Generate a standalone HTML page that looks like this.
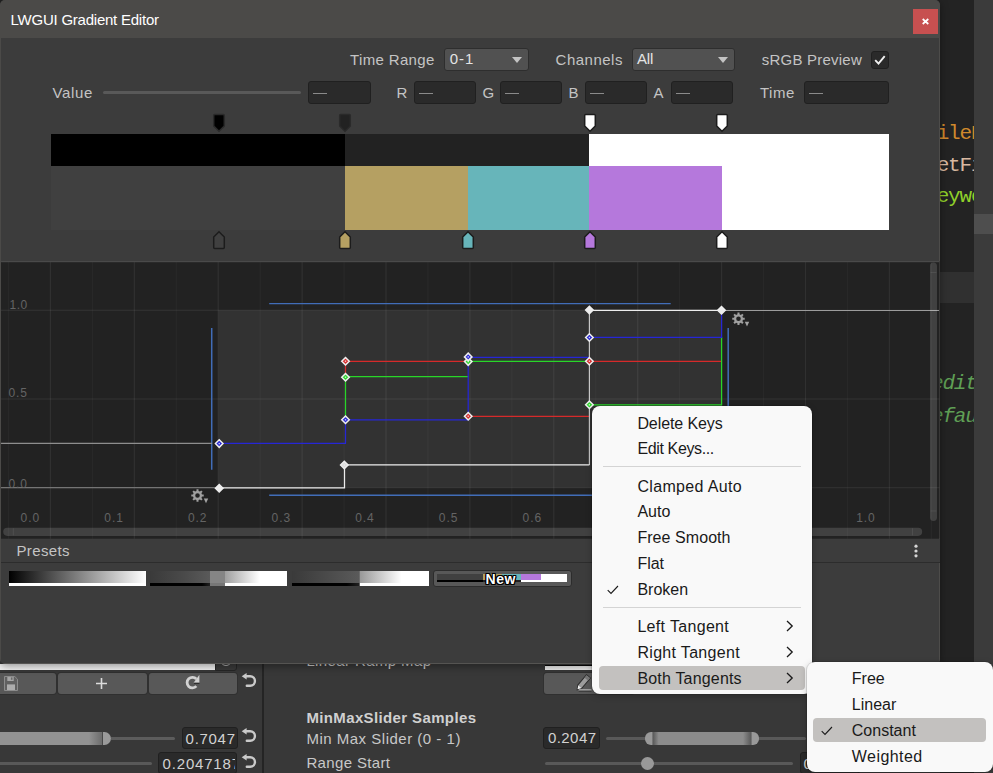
<!DOCTYPE html>
<html><head><meta charset="utf-8"><title>LWGUI Gradient Editor</title>
<style>
html,body{margin:0;padding:0;}
body{width:993px;height:773px;overflow:hidden;background:#222222;position:relative;font-family:"Liberation Sans",sans-serif;}
body div,body span,body svg{position:absolute;display:block;}
span{white-space:pre;}
</style></head><body>
<div style="left:940px;top:0px;width:34px;height:773px;background:#232323;"></div>
<div style="left:940px;top:272px;width:34px;height:31px;background:#303030;"></div>
<div style="left:974px;top:0px;width:19px;height:773px;background:#3b3b3b;"></div>
<div style="left:974px;top:214px;width:19px;height:20px;background:#4e4e4e;"></div>
<div style="left:940px;top:0;width:34px;height:773px;overflow:hidden">
<span style="left:-14.7px;top:119.8px;color:#d0892c;font-size:21px;line-height:28px;letter-spacing:-1.2px;font-family:'Liberation Mono',monospace;">FileName</span>
<span style="left:-14.7px;top:151.6px;color:#d9b8a0;font-size:21px;line-height:28px;letter-spacing:-1.2px;font-family:'Liberation Mono',monospace;">SetFile</span>
<span style="left:-14.7px;top:182.7px;color:#8fd02a;font-size:21px;line-height:28px;letter-spacing:-1.2px;font-family:'Liberation Mono',monospace;">Keyword</span>
<span style="left:-9px;top:370.3px;color:#5f9f55;font-style:italic;font-size:21px;line-height:28px;letter-spacing:-1.2px;font-family:'Liberation Mono',monospace;">editor</span>
<span style="left:-9px;top:402.7px;color:#5f9f55;font-style:italic;font-size:21px;line-height:28px;letter-spacing:-1.2px;font-family:'Liberation Mono',monospace;">efault</span>
</div>
<div style="left:0px;top:655px;width:940px;height:118px;background:#383838;"></div>
<div style="left:264px;top:655px;width:676px;height:118px;background:#383838;"></div>
<div style="left:262px;top:655px;width:2px;height:118px;background:#242424;"></div>
<div style="left:0px;top:664px;width:215px;height:6px;background:#f2f2f2;"></div>
<div style="left:215px;top:655px;width:22px;height:16px;background:#3a3a3a;border:1px solid #262626;box-sizing:border-box;border-radius:0 0 3px 0;"></div>
<div style="left:219.5px;top:654px;width:12px;height:12px;border:1.5px solid #b0b0b0;border-radius:50%;box-sizing:border-box"></div>
<div style="left:544.5px;top:665px;width:60px;height:1px;background:#0a0a0a;"></div>
<div style="left:544.5px;top:666px;width:60px;height:4px;background:#ebebeb;"></div>
<div style="left:-3px;top:673px;width:59px;height:21px;background:#585858;box-shadow:0 0 0 1px #303030;border-radius:0 3px 3px 0"></div>
<div style="left:58px;top:673px;width:88.5px;height:21px;background:#585858;box-shadow:0 0 0 1px #303030;border-radius:3px"></div>
<div style="left:148.5px;top:673px;width:88.5px;height:21px;background:#585858;box-shadow:0 0 0 1px #303030;border-radius:3px"></div>
<div style="left:544px;top:673px;width:90px;height:21px;background:#585858;box-shadow:0 0 0 1px #303030;border-radius:3px"></div>
<svg style="left:3.7px;top:675.7px" width="14" height="15" viewBox="0 0 14 15"><path d="M0.5 0.5h10.3l2.7 2.7v11.3h-13z" fill="#616161" stroke="#8c8c8c"/><rect x="3.3" y="1" width="6.4" height="4" fill="#a6a6a6"/><rect x="6.9" y="1.4" width="1.6" height="2.4" fill="#6a6a6a"/><rect x="3" y="8.4" width="8" height="5.6" fill="#adadad"/></svg>
<svg style="left:95px;top:677px" width="13" height="13" viewBox="0 0 13 13"><path d="M6.5 1v11M1 6.5h11" stroke="#dcdcdc" stroke-width="1.6" fill="none"/></svg>
<svg style="left:185px;top:674px" width="16" height="17" viewBox="0 0 16 17"><path d="M11.34 12.15A5.3 5.3 0 1 1 11.34 5.05" stroke="#d2d2d2" stroke-width="2.8" fill="none"/><path d="M14.4 0.7V8.7H8.6z" fill="#d2d2d2"/><path d="M9 9.3h5.4" stroke="#262626" stroke-width="1"/></svg>
<svg style="left:574px;top:672px" width="20" height="21" viewBox="0 0 20 21"><g transform="translate(3.2,17.8) rotate(-50)"><path d="M0 0L4 -2.6H17.6V2.6H4Z" fill="#9c9c9c" stroke="#2c2c2c" stroke-width="1"/><path d="M0.6 0L4 -2.1V2.1Z" fill="#ececec"/><path d="M14 -2.1H17.1V2.1H14Z" fill="#777777"/></g><path d="M4.7 18h12.7" stroke="#c4c4c4" stroke-width="1.3"/><path d="M4.7 19.1h12.7" stroke="#2a2a2a" stroke-width="0.9"/></svg>
<svg style="left:241px;top:672.1px" width="17" height="17" viewBox="0 0 17 17"><path d="M5.4 4.3h3.8a4.75 4.75 0 0 1 0 9.5H5.8" stroke="#cacaca" stroke-width="2.4" fill="none" stroke-linecap="round"/><path d="M0.7 4.3l4.9-3.2v6.4z" fill="#cacaca"/></svg>
<svg style="left:241px;top:727.3px" width="17" height="17" viewBox="0 0 17 17"><path d="M5.4 4.3h3.8a4.75 4.75 0 0 1 0 9.5H5.8" stroke="#cacaca" stroke-width="2.4" fill="none" stroke-linecap="round"/><path d="M0.7 4.3l4.9-3.2v6.4z" fill="#cacaca"/></svg>
<svg style="left:241px;top:752.5px" width="17" height="17" viewBox="0 0 17 17"><path d="M5.4 4.3h3.8a4.75 4.75 0 0 1 0 9.5H5.8" stroke="#cacaca" stroke-width="2.4" fill="none" stroke-linecap="round"/><path d="M0.7 4.3l4.9-3.2v6.4z" fill="#cacaca"/></svg>
<div style="left:-4px;top:732px;width:106px;height:13px;background:linear-gradient(90deg,#929292 0,#929292 87.7%,#6c6c6c 100%);border-radius:3px 0 0 3px"></div>
<div style="left:102px;top:732px;width:0.7px;height:13px;background:#484848;"></div>
<div style="left:102.6px;top:732px;width:8.4px;height:13px;background:#9a9a9a;border-radius:0 6.5px 6.5px 0"></div>
<div style="left:110.5px;top:737px;width:64px;height:3.2px;background:#5c5c5c;border-radius:0 1.5px 1.5px 0;"></div>
<div style="left:181.5px;top:727px;width:56px;height:22.3px;background:#2a2a2a;border:1px solid #202020;box-sizing:border-box;border-radius:3px;overflow:hidden"></div>
<span style="left:185.60px;top:729.57px;font-size:15px;line-height:18px;color:#d2d2d2;letter-spacing:0.704px;font-weight:400;">0.7047</span>
<div style="left:-2px;top:762px;width:154px;height:3px;background:#595959;border-radius:1.5px;"></div>
<div style="left:158.3px;top:752.2px;width:79.2px;height:22.3px;background:#2a2a2a;border:1px solid #202020;box-sizing:border-box;border-radius:3px;"></div>
<div style="left:159px;top:753px;width:76px;height:20px;overflow:hidden">
<span style="left:3.60px;top:1.67px;font-size:15px;line-height:18px;color:#d2d2d2;letter-spacing:0.812px;font-weight:400;">0.2047187</span>
</div>
<span style="left:306.40px;top:651.67px;font-size:15px;line-height:18px;color:#c8c8c8;letter-spacing:0.384px;font-weight:400;">Linear Ramp Map</span>
<span style="left:306.40px;top:708.87px;font-size:15px;line-height:18px;color:#d0d0d0;letter-spacing:0.371px;font-weight:700;">MinMaxSlider Samples</span>
<span style="left:306.40px;top:729.67px;font-size:15px;line-height:18px;color:#c8c8c8;letter-spacing:0.506px;font-weight:400;">Min Max Slider (0 - 1)</span>
<span style="left:306.40px;top:754.47px;font-size:15px;line-height:18px;color:#c8c8c8;letter-spacing:0.355px;font-weight:400;">Range Start</span>
<div style="left:543px;top:727px;width:57px;height:22.3px;background:#2a2a2a;border:1px solid #202020;box-sizing:border-box;border-radius:3px;"></div>
<span style="left:548.00px;top:729.47px;font-size:15px;line-height:18px;color:#d2d2d2;letter-spacing:0.424px;font-weight:400;">0.2047</span>
<div style="left:605.5px;top:737px;width:200px;height:3px;background:#595959;border-radius:1.5px;"></div>
<div style="left:645px;top:732px;width:114px;height:13px;background:linear-gradient(90deg,#999 0,#999 6%,#5a5a5a 7%,#8c8c8c 12%,#8c8c8c 86%,#5a5a5a 93%,#999 94%,#999 100%);border-radius:6px"></div>
<div style="left:545px;top:762px;width:248px;height:3px;background:#595959;border-radius:1.5px;"></div>
<div style="left:641px;top:757px;width:13px;height:13px;background:#999;border-radius:50%"></div>
<div style="left:800px;top:752.2px;width:60px;height:22.3px;background:#2a2a2a;border:1px solid #202020;box-sizing:border-box;border-radius:3px;"></div>
<span style="left:803.60px;top:754.57px;font-size:15px;line-height:18px;color:#d2d2d2;letter-spacing:0.000px;font-weight:400;">0.2</span>
<div style="left:0;top:0;width:940px;height:663.7px;background:#3c3c3c;border-radius:5px;overflow:hidden;box-shadow:0 2px 9px rgba(0,0,0,0.4)">
<div style="left:0px;top:0px;width:940px;height:38px;background:#4b4a48;"></div>
<div style="left:0px;top:38px;width:1px;height:626px;background:#4b4a48;"></div>
<div style="left:0px;top:662.7px;width:940px;height:1px;background:#555452;"></div>
<div style="left:938.7px;top:38px;width:1.3px;height:626px;background:#4d4c4a;"></div>
<span style="left:10.60px;top:10.67px;font-size:15px;line-height:18px;color:#ffffff;letter-spacing:-0.235px;font-weight:400;">LWGUI Gradient Editor</span>
<div style="left:913px;top:9px;width:25px;height:25px;background:#c75050;"></div>
<svg style="left:920px;top:15.5px" width="11" height="11" viewBox="0 0 11 11"><path d="M2.7 3l5.6 5M8.3 3l-5.6 5" stroke="#fff" stroke-width="1.7" fill="none"/></svg>
<span style="left:350.00px;top:50.67px;font-size:15px;line-height:18px;color:#c4c4c4;letter-spacing:0.350px;font-weight:400;">Time Range</span>
<div style="left:444px;top:48px;width:84.5px;height:22.5px;background:#515151;border:1px solid #2e2e2e;box-sizing:border-box;border-radius:3px;"></div>
<span style="left:449.80px;top:49.87px;font-size:15px;line-height:18px;color:#e4e4e4;letter-spacing:0.910px;font-weight:400;">0-1</span>
<svg style="left:511.5px;top:57px" width="10" height="6" viewBox="0 0 10 6"><path d="M0 0h10l-5 6z" fill="#c4c4c4"/></svg>
<span style="left:555.60px;top:50.67px;font-size:15px;line-height:18px;color:#c4c4c4;letter-spacing:0.489px;font-weight:400;">Channels</span>
<div style="left:632px;top:48px;width:102.5px;height:22.5px;background:#515151;border:1px solid #2e2e2e;box-sizing:border-box;border-radius:3px;"></div>
<span style="left:637.00px;top:49.87px;font-size:15px;line-height:18px;color:#e4e4e4;letter-spacing:-0.135px;font-weight:400;">All</span>
<svg style="left:717.5px;top:57px" width="10" height="6" viewBox="0 0 10 6"><path d="M0 0h10l-5 6z" fill="#c4c4c4"/></svg>
<span style="left:761.70px;top:50.67px;font-size:15px;line-height:18px;color:#c4c4c4;letter-spacing:0.234px;font-weight:400;">sRGB Preview</span>
<div style="left:871px;top:51px;width:17.5px;height:18px;background:#2a2a2a;border:1px solid #202020;box-sizing:border-box;border-radius:3px;"></div>
<svg style="left:873px;top:53px" width="14" height="14" viewBox="0 0 14 14"><path d="M2.2 7.2l3.3 3.4 6.2-7.4" stroke="#f0f0f0" stroke-width="1.9" fill="none"/></svg>
<span style="left:52.40px;top:83.77px;font-size:15px;line-height:18px;color:#c4c4c4;letter-spacing:0.687px;font-weight:400;">Value</span>
<div style="left:103px;top:91px;width:198px;height:3px;background:#595959;border-radius:1.5px;"></div>
<div style="left:308px;top:81px;width:62.5px;height:22.5px;background:#2a2a2a;border:1px solid #202020;box-sizing:border-box;border-radius:3px;"></div>
<div style="left:312.5px;top:93px;width:14.5px;height:1px;background:#8a8a8a;"></div>
<span style="left:396.40px;top:83.97px;font-size:15px;line-height:18px;color:#c4c4c4;letter-spacing:0.000px;font-weight:400;">R</span>
<div style="left:414px;top:81px;width:62px;height:22.5px;background:#2a2a2a;border:1px solid #202020;box-sizing:border-box;border-radius:3px;"></div>
<div style="left:418.5px;top:93px;width:14.5px;height:1px;background:#8a8a8a;"></div>
<span style="left:482.60px;top:83.97px;font-size:15px;line-height:18px;color:#c4c4c4;letter-spacing:0.000px;font-weight:400;">G</span>
<div style="left:500px;top:81px;width:62px;height:22.5px;background:#2a2a2a;border:1px solid #202020;box-sizing:border-box;border-radius:3px;"></div>
<div style="left:504.5px;top:93px;width:14.5px;height:1px;background:#8a8a8a;"></div>
<span style="left:568.50px;top:83.97px;font-size:15px;line-height:18px;color:#c4c4c4;letter-spacing:0.000px;font-weight:400;">B</span>
<div style="left:585.3px;top:81px;width:61.700000000000045px;height:22.5px;background:#2a2a2a;border:1px solid #202020;box-sizing:border-box;border-radius:3px;"></div>
<div style="left:589.8px;top:93px;width:14.5px;height:1px;background:#8a8a8a;"></div>
<span style="left:653.40px;top:83.97px;font-size:15px;line-height:18px;color:#c4c4c4;letter-spacing:0.000px;font-weight:400;">A</span>
<div style="left:671px;top:81px;width:62px;height:22.5px;background:#2a2a2a;border:1px solid #202020;box-sizing:border-box;border-radius:3px;"></div>
<div style="left:675.5px;top:93px;width:14.5px;height:1px;background:#8a8a8a;"></div>
<span style="left:759.90px;top:83.97px;font-size:15px;line-height:18px;color:#c4c4c4;letter-spacing:0.541px;font-weight:400;">Time</span>
<div style="left:804px;top:81px;width:85px;height:22.5px;background:#2a2a2a;border:1px solid #202020;box-sizing:border-box;border-radius:3px;"></div>
<div style="left:808.5px;top:93px;width:14.5px;height:1px;background:#8a8a8a;"></div>
<div style="left:51px;top:134px;width:838px;height:96px;background:#ffffff;"></div>
<div style="left:51px;top:134px;width:293.7px;height:32px;background:#000000;"></div>
<div style="left:344.7px;top:134px;width:244.6px;height:32px;background:#222222;"></div>
<div style="left:51px;top:166px;width:293.7px;height:64px;background:#404040;"></div>
<div style="left:344.7px;top:166px;width:123.5px;height:64px;background:#b5a062;"></div>
<div style="left:468px;top:166px;width:121.3px;height:64px;background:#67b5ba;"></div>
<div style="left:589.3px;top:166px;width:132.4px;height:64px;background:#b578dc;"></div>
<svg style="left:212.2px;top:113px" width="14" height="20" viewBox="0 0 14 20"><path d="M1.7 2.5a1 1 0 0 1 1-1h8.6a1 1 0 0 1 1 1v10.5l-5.3 5.3-5.3-5.3z" fill="#000000" stroke="#2a2a2a" stroke-width="1.5"/></svg>
<svg style="left:337.8px;top:113px" width="14" height="20" viewBox="0 0 14 20"><path d="M1.7 2.5a1 1 0 0 1 1-1h8.6a1 1 0 0 1 1 1v10.5l-5.3 5.3-5.3-5.3z" fill="#222222" stroke="#2a2a2a" stroke-width="1.5"/></svg>
<svg style="left:582.6px;top:113px" width="14" height="20" viewBox="0 0 14 20"><path d="M1.7 2.5a1 1 0 0 1 1-1h8.6a1 1 0 0 1 1 1v10.5l-5.3 5.3-5.3-5.3z" fill="#ffffff" stroke="#1c1c1c" stroke-width="1.5"/></svg>
<svg style="left:714.9px;top:113px" width="14" height="20" viewBox="0 0 14 20"><path d="M1.7 2.5a1 1 0 0 1 1-1h8.6a1 1 0 0 1 1 1v10.5l-5.3 5.3-5.3-5.3z" fill="#ffffff" stroke="#1c1c1c" stroke-width="1.5"/></svg>
<svg style="left:212.2px;top:230px" width="14" height="20" viewBox="0 0 14 20"><path d="M1.7 17.5a1 1 0 0 0 1 1h8.6a1 1 0 0 0 1-1v-10.5l-5.3-5.3-5.3 5.3z" fill="#404040" stroke="#1c1c1c" stroke-width="1.5"/></svg>
<svg style="left:337.8px;top:230px" width="14" height="20" viewBox="0 0 14 20"><path d="M1.7 17.5a1 1 0 0 0 1 1h8.6a1 1 0 0 0 1-1v-10.5l-5.3-5.3-5.3 5.3z" fill="#b5a062" stroke="#1c1c1c" stroke-width="1.5"/></svg>
<svg style="left:461.2px;top:230px" width="14" height="20" viewBox="0 0 14 20"><path d="M1.7 17.5a1 1 0 0 0 1 1h8.6a1 1 0 0 0 1-1v-10.5l-5.3-5.3-5.3 5.3z" fill="#67b5ba" stroke="#1c1c1c" stroke-width="1.5"/></svg>
<svg style="left:582.6px;top:230px" width="14" height="20" viewBox="0 0 14 20"><path d="M1.7 17.5a1 1 0 0 0 1 1h8.6a1 1 0 0 0 1-1v-10.5l-5.3-5.3-5.3 5.3z" fill="#b578dc" stroke="#1c1c1c" stroke-width="1.5"/></svg>
<svg style="left:714.9px;top:230px" width="14" height="20" viewBox="0 0 14 20"><path d="M1.7 17.5a1 1 0 0 0 1 1h8.6a1 1 0 0 0 1-1v-10.5l-5.3-5.3-5.3 5.3z" fill="#ffffff" stroke="#1c1c1c" stroke-width="1.5"/></svg>
<svg style="left:1px;top:261px" width="938.5" height="277.7" viewBox="1 261 938.5 277.7"><rect x="1" y="261" width="938.5" height="277.7" fill="#222222"/><rect x="218.4" y="310.3" width="503.4" height="177.4" fill="#323232"/><rect x="7.85" y="261" width="1.2" height="277.7" fill="#ffffff" fill-opacity="0.03"/><rect x="49.80" y="261" width="1.2" height="277.7" fill="#ffffff" fill-opacity="0.065"/><rect x="91.75" y="261" width="1.2" height="277.7" fill="#ffffff" fill-opacity="0.03"/><rect x="133.70" y="261" width="1.2" height="277.7" fill="#ffffff" fill-opacity="0.065"/><rect x="175.65" y="261" width="1.2" height="277.7" fill="#ffffff" fill-opacity="0.03"/><rect x="217.60" y="261" width="1.2" height="277.7" fill="#ffffff" fill-opacity="0.065"/><rect x="259.55" y="261" width="1.2" height="277.7" fill="#ffffff" fill-opacity="0.03"/><rect x="301.50" y="261" width="1.2" height="277.7" fill="#ffffff" fill-opacity="0.065"/><rect x="343.45" y="261" width="1.2" height="277.7" fill="#ffffff" fill-opacity="0.03"/><rect x="385.40" y="261" width="1.2" height="277.7" fill="#ffffff" fill-opacity="0.065"/><rect x="427.35" y="261" width="1.2" height="277.7" fill="#ffffff" fill-opacity="0.03"/><rect x="469.30" y="261" width="1.2" height="277.7" fill="#ffffff" fill-opacity="0.065"/><rect x="511.25" y="261" width="1.2" height="277.7" fill="#ffffff" fill-opacity="0.03"/><rect x="553.20" y="261" width="1.2" height="277.7" fill="#ffffff" fill-opacity="0.065"/><rect x="595.15" y="261" width="1.2" height="277.7" fill="#ffffff" fill-opacity="0.03"/><rect x="637.10" y="261" width="1.2" height="277.7" fill="#ffffff" fill-opacity="0.065"/><rect x="679.05" y="261" width="1.2" height="277.7" fill="#ffffff" fill-opacity="0.03"/><rect x="721.00" y="261" width="1.2" height="277.7" fill="#ffffff" fill-opacity="0.065"/><rect x="762.95" y="261" width="1.2" height="277.7" fill="#ffffff" fill-opacity="0.03"/><rect x="804.90" y="261" width="1.2" height="277.7" fill="#ffffff" fill-opacity="0.065"/><rect x="846.85" y="261" width="1.2" height="277.7" fill="#ffffff" fill-opacity="0.03"/><rect x="888.80" y="261" width="1.2" height="277.7" fill="#ffffff" fill-opacity="0.065"/><rect x="930.75" y="261" width="1.2" height="277.7" fill="#ffffff" fill-opacity="0.03"/><rect x="1" y="309.70" width="938.5" height="1.2" fill="#ffffff" fill-opacity="0.065"/><rect x="1" y="398.40" width="938.5" height="1.2" fill="#ffffff" fill-opacity="0.065"/><rect x="1" y="487.10" width="938.5" height="1.2" fill="#ffffff" fill-opacity="0.065"/><rect x="1" y="261" width="938.5" height="1.2" fill="#4a4a4a"/><path d="M269.2 303.6H670.7M269.2 495.2H670.7" stroke="#416db8" stroke-width="1.4" fill="none"/><path d="M211.7 327.9V469.8M728.2 327.9V469.8" stroke="#416db8" stroke-width="1.5" fill="none"/><path d="M1 443.5H212" stroke="#8e8e8e" stroke-width="1.25" fill="none"/><path d="M1 487.7H219" stroke="#747474" stroke-width="1.15" fill="none"/><path d="M721.6 310.5H939" stroke="#9c9c9c" stroke-width="1.2" fill="none"/><path d="M345.5 378V361.5H468.2M468.2 416.4H589.4M589.4 361.5H721.6" stroke="#d62a2a" stroke-width="1.25" fill="none"/><path d="M345.5 421V376.6H468.2M468.2 361.5H589.4M589.4 404.9H721.6V337" stroke="#28d628" stroke-width="1.25" fill="none"/><path d="M219 443.5H345.5V420H468.2V357.5H589.4M589.4 337.5H721.6V310.5" stroke="#2626d6" stroke-width="1.25" fill="none"/><path d="M589.4 465V310.5" stroke="#cdcdcd" stroke-width="1.15" fill="none"/><path d="M219 487.8H344.5V465H589.4M589.4 310.5H721.6" stroke="#ededed" stroke-width="1.25" fill="none"/><path d="M345.5 357.45L349.25 361.2L345.5 364.95L341.75 361.2Z" fill="#d62a2a" stroke="#eeeeee" stroke-width="1.5"/><rect x="344.8" y="360.5" width="1.4" height="1.4" fill="#f0f0f0" fill-opacity="0.85"/><path d="M468.2 412.45L471.95 416.2L468.2 419.95L464.45 416.2Z" fill="#d62a2a" stroke="#eeeeee" stroke-width="1.5"/><rect x="467.5" y="415.5" width="1.4" height="1.4" fill="#f0f0f0" fill-opacity="0.85"/><path d="M345.5 373.45L349.25 377.2L345.5 380.95L341.75 377.2Z" fill="#28d628" stroke="#eeeeee" stroke-width="1.5"/><rect x="344.8" y="376.5" width="1.4" height="1.4" fill="#f0f0f0" fill-opacity="0.85"/><path d="M468.2 357.85L471.95 361.6L468.2 365.35L464.45 361.6Z" fill="#28d628" stroke="#eeeeee" stroke-width="1.5"/><rect x="467.5" y="360.90000000000003" width="1.4" height="1.4" fill="#f0f0f0" fill-opacity="0.85"/><path d="M219.2 439.85L222.95 443.6L219.2 447.35L215.45 443.6Z" fill="#2626d6" stroke="#eeeeee" stroke-width="1.5"/><rect x="218.5" y="442.90000000000003" width="1.4" height="1.4" fill="#f0f0f0" fill-opacity="0.85"/><path d="M345.5 416.05L349.25 419.8L345.5 423.55L341.75 419.8Z" fill="#2626d6" stroke="#eeeeee" stroke-width="1.5"/><rect x="344.8" y="419.1" width="1.4" height="1.4" fill="#f0f0f0" fill-opacity="0.85"/><path d="M468.2 353.15L471.95 356.9L468.2 360.65L464.45 356.9Z" fill="#2626d6" stroke="#eeeeee" stroke-width="1.5"/><rect x="467.5" y="356.2" width="1.4" height="1.4" fill="#f0f0f0" fill-opacity="0.85"/><path d="M589.4 401.05L593.15 404.8L589.4 408.55L585.65 404.8Z" fill="#28d628" stroke="#eeeeee" stroke-width="1.5"/><rect x="588.6999999999999" y="404.1" width="1.4" height="1.4" fill="#f0f0f0" fill-opacity="0.85"/><path d="M589.4 357.45L593.15 361.2L589.4 364.95L585.65 361.2Z" fill="#d62a2a" stroke="#eeeeee" stroke-width="1.5"/><rect x="588.6999999999999" y="360.5" width="1.4" height="1.4" fill="#f0f0f0" fill-opacity="0.85"/><path d="M589.4 333.75L593.15 337.5L589.4 341.25L585.65 337.5Z" fill="#2626d6" stroke="#eeeeee" stroke-width="1.5"/><rect x="588.6999999999999" y="336.8" width="1.4" height="1.4" fill="#f0f0f0" fill-opacity="0.85"/><path d="M219.2 484.55L222.95 488.3L219.2 492.05L215.45 488.3Z" fill="#ededed" stroke="#eeeeee" stroke-width="1.5"/><path d="M344.3 461.25L348.05 465L344.3 468.75L340.55 465Z" fill="#dcdcdc" stroke="#eeeeee" stroke-width="1.5"/><rect x="343.6" y="464.3" width="1.4" height="1.4" fill="#f0f0f0" fill-opacity="0.85"/><path d="M589.4 306.25L593.15 310L589.4 313.75L585.65 310Z" fill="#ededed" stroke="#eeeeee" stroke-width="1.5"/><path d="M721.5 306.55L725.25 310.3L721.5 314.05L717.75 310.3Z" fill="#ededed" stroke="#eeeeee" stroke-width="1.5"/><path d="M744.72 317.80L744.72 319.80L742.98 319.85L742.41 321.23L743.61 322.49L742.19 323.91L740.93 322.71L739.55 323.28L739.50 325.02L737.50 325.02L737.45 323.28L736.07 322.71L734.81 323.91L733.39 322.49L734.59 321.23L734.02 319.85L732.28 319.80L732.28 317.80L734.02 317.75L734.59 316.37L733.39 315.11L734.81 313.69L736.07 314.89L737.45 314.32L737.50 312.58L739.50 312.58L739.55 314.32L740.93 314.89L742.19 313.69L743.61 315.11L742.41 316.37L742.98 317.75ZM740.8 318.8a2.3 2.3 0 1 0 -4.6 0a2.3 2.3 0 1 0 4.6 0Z" fill="#a0a0a0" fill-rule="evenodd"/><path d="M744.8 321.7h4.4l-2.2 4.8z" fill="#a4a4a4"/><path d="M203.72 494.50L203.72 496.50L201.98 496.55L201.41 497.93L202.61 499.19L201.19 500.61L199.93 499.41L198.55 499.98L198.50 501.72L196.50 501.72L196.45 499.98L195.07 499.41L193.81 500.61L192.39 499.19L193.59 497.93L193.02 496.55L191.28 496.50L191.28 494.50L193.02 494.45L193.59 493.07L192.39 491.81L193.81 490.39L195.07 491.59L196.45 491.02L196.50 489.28L198.50 489.28L198.55 491.02L199.93 491.59L201.19 490.39L202.61 491.81L201.41 493.07L201.98 494.45ZM199.8 495.5a2.3 2.3 0 1 0 -4.6 0a2.3 2.3 0 1 0 4.6 0Z" fill="#a0a0a0" fill-rule="evenodd"/><path d="M203.8 498.4h4.4l-2.2 4.8z" fill="#a4a4a4"/><rect x="3.2" y="527.7" width="919" height="8.2" rx="4.1" fill="#ffffff" fill-opacity="0.14"/><rect x="12.8" y="528.2" width="1" height="7.2" fill="#ffffff" fill-opacity="0.08"/><rect x="912" y="528.2" width="1" height="7.2" fill="#ffffff" fill-opacity="0.08"/><rect x="930" y="262.5" width="7" height="258.5" rx="3.5" fill="#ffffff" fill-opacity="0.14"/><rect x="930.5" y="272" width="6" height="1" fill="#ffffff" fill-opacity="0.08"/><rect x="930.5" y="510.5" width="6" height="1" fill="#ffffff" fill-opacity="0.08"/></svg>
<span style="left:20.60px;top:510.64px;font-size:12px;line-height:14px;color:#646464;letter-spacing:0.959px;font-weight:400;">0.0</span>
<span style="left:104.25px;top:510.64px;font-size:12px;line-height:14px;color:#646464;letter-spacing:0.959px;font-weight:400;">0.1</span>
<span style="left:187.90px;top:510.64px;font-size:12px;line-height:14px;color:#646464;letter-spacing:0.959px;font-weight:400;">0.2</span>
<span style="left:271.55px;top:510.64px;font-size:12px;line-height:14px;color:#646464;letter-spacing:0.959px;font-weight:400;">0.3</span>
<span style="left:355.20px;top:510.64px;font-size:12px;line-height:14px;color:#646464;letter-spacing:0.959px;font-weight:400;">0.4</span>
<span style="left:438.85px;top:510.64px;font-size:12px;line-height:14px;color:#646464;letter-spacing:0.959px;font-weight:400;">0.5</span>
<span style="left:522.50px;top:510.64px;font-size:12px;line-height:14px;color:#646464;letter-spacing:0.959px;font-weight:400;">0.6</span>
<span style="left:856.20px;top:510.64px;font-size:12px;line-height:14px;color:#646464;letter-spacing:0.959px;font-weight:400;">1.0</span>
<span style="left:9.60px;top:297.64px;font-size:12px;line-height:14px;color:#646464;letter-spacing:0.459px;font-weight:400;">1.0</span>
<span style="left:8.50px;top:386.44px;font-size:12px;line-height:14px;color:#646464;letter-spacing:0.909px;font-weight:400;">0.5</span>
<span style="left:8.50px;top:476.64px;font-size:12px;line-height:14px;color:#646464;letter-spacing:0.909px;font-weight:400;">0.0</span>
<div style="left:1px;top:538.7px;width:938.5px;height:23.5px;background:#3c3c3c;"></div>
<div style="left:1px;top:562px;width:938.5px;height:1px;background:#2c2c2c;"></div>
<span style="left:16.50px;top:541.87px;font-size:15px;line-height:18px;color:#c4c4c4;letter-spacing:0.358px;font-weight:400;">Presets</span>
<svg style="left:913px;top:544px" width="6" height="14" viewBox="0 0 6 14"><circle cx="3" cy="2.2" r="1.6" fill="#d6d6d6"/><circle cx="3" cy="7" r="1.6" fill="#d6d6d6"/><circle cx="3" cy="11.8" r="1.6" fill="#d6d6d6"/></svg>
<div style="left:9px;top:570.7px;width:137.3px;height:12.3px;background:linear-gradient(90deg,#000,#fff)"></div>
<div style="left:9px;top:583px;width:137.3px;height:3px;background:#ffffff;"></div>
<div style="left:150px;top:570.7px;width:137px;height:12.3px;background:linear-gradient(90deg,#3a3a3a 0,#4a4a4a 25%,#5a5a5a 44%,#858585 44%,#858585 55%,#a0a0a0 55%,#ffffff 80%)"></div>
<div style="left:150px;top:583px;width:137px;height:3px;background:linear-gradient(90deg,#000 0,#000 38%,#222 44%,#777 44%,#777 55%,#fff 55%)"></div>
<div style="left:291.7px;top:570.7px;width:137.3px;height:12.3px;background:linear-gradient(90deg,#3a3a3a 0,#4a4a4a 25%,#5a5a5a 49%,#999 50%,#ffffff 80%)"></div>
<div style="left:291.7px;top:583px;width:137.3px;height:3px;background:linear-gradient(90deg,#000 0,#000 40%,#222 49%,#fff 50%)"></div>
<div style="left:432.5px;top:569.7px;width:139px;height:17px;background:#585858;border:1px solid #2c2c2c;box-sizing:border-box;border-radius:3px"></div>
<div style="left:437px;top:574.2px;width:130px;height:8.2px;background:#ffffff;"></div>
<div style="left:437px;top:574.2px;width:45.5px;height:6.2px;background:#404040;"></div>
<div style="left:437px;top:580.4px;width:45.5px;height:2px;background:#000;"></div>
<div style="left:482.5px;top:574.2px;width:19.5px;height:6.2px;background:#b5a062;"></div>
<div style="left:482.5px;top:580.4px;width:38px;height:2px;background:#222;"></div>
<div style="left:502px;top:574.2px;width:18.6px;height:6.2px;background:#67b5ba;"></div>
<div style="left:520.6px;top:574.2px;width:20.4px;height:6.2px;background:#b578dc;"></div>
<span style="left:485.60px;top:570.66px;font-size:14px;line-height:17px;color:#ffffff;letter-spacing:0.507px;font-weight:700;text-shadow:-1px -1px 0 #000,1px -1px 0 #000,-1px 1px 0 #000,1px 1px 0 #000,0 1px 0 #000,0 -1px 0 #000,1px 0 0 #000,-1px 0 0 #000;">New</span>
</div>
<div style="left:592.3px;top:406px;width:219.7px;height:288px;background:#f9f9f9;border-radius:8px;box-shadow:0 0 0 1px rgba(0,0,0,0.10),0 2px 7px rgba(0,0,0,0.22);"></div>
<div style="left:599px;top:666px;width:206px;height:24px;background:#c3c1bf;border-radius:4px;"></div>
<span style="left:637.40px;top:413.78px;font-size:16px;line-height:19px;color:#1a1a1a;letter-spacing:-0.087px;font-weight:400;">Delete Keys</span>
<span style="left:637.40px;top:439.38px;font-size:16px;line-height:19px;color:#1a1a1a;letter-spacing:-0.366px;font-weight:400;">Edit Keys...</span>
<span style="left:637.40px;top:476.58px;font-size:16px;line-height:19px;color:#1a1a1a;letter-spacing:0.336px;font-weight:400;">Clamped Auto</span>
<span style="left:637.40px;top:502.38px;font-size:16px;line-height:19px;color:#1a1a1a;letter-spacing:0.000px;font-weight:400;">Auto</span>
<span style="left:637.40px;top:528.18px;font-size:16px;line-height:19px;color:#1a1a1a;letter-spacing:0.062px;font-weight:400;">Free Smooth</span>
<span style="left:637.40px;top:554.18px;font-size:16px;line-height:19px;color:#1a1a1a;letter-spacing:0.000px;font-weight:400;">Flat</span>
<span style="left:637.40px;top:580.38px;font-size:16px;line-height:19px;color:#1a1a1a;letter-spacing:0.000px;font-weight:400;">Broken</span>
<span style="left:637.40px;top:617.38px;font-size:16px;line-height:19px;color:#1a1a1a;letter-spacing:0.329px;font-weight:400;">Left Tangent</span>
<span style="left:637.40px;top:643.18px;font-size:16px;line-height:19px;color:#1a1a1a;letter-spacing:0.321px;font-weight:400;">Right Tangent</span>
<span style="left:637.40px;top:669.18px;font-size:16px;line-height:19px;color:#1a1a1a;letter-spacing:0.183px;font-weight:400;">Both Tangents</span>
<div style="left:603px;top:465.5px;width:198px;height:1px;background:#d4d4d4;"></div>
<div style="left:603px;top:607.3px;width:198px;height:1px;background:#d4d4d4;"></div>
<svg style="left:786px;top:620.3px" width="8" height="12" viewBox="0 0 8 12"><path d="M1 1l5.2 5-5.2 5" stroke="#1a1a1a" stroke-width="1.3" fill="none"/></svg>
<svg style="left:786px;top:646.2px" width="8" height="12" viewBox="0 0 8 12"><path d="M1 1l5.2 5-5.2 5" stroke="#1a1a1a" stroke-width="1.3" fill="none"/></svg>
<svg style="left:786px;top:672px" width="8" height="12" viewBox="0 0 8 12"><path d="M1 1l5.2 5-5.2 5" stroke="#1a1a1a" stroke-width="1.3" fill="none"/></svg>
<svg style="left:606.5px;top:585px" width="12" height="10" viewBox="0 0 12 10"><path d="M0.7 5.2l3.3 3.3 7-7.5" stroke="#1a1a1a" stroke-width="1.1" fill="none"/></svg>
<div style="left:806.6px;top:662px;width:186px;height:109.6px;background:#f9f9f9;border-radius:8px;box-shadow:0 0 0 1px rgba(0,0,0,0.10),0 2px 7px rgba(0,0,0,0.22);"></div>
<div style="left:813px;top:718.2px;width:173px;height:23.6px;background:#c3c1bf;border-radius:4px;"></div>
<span style="left:851.80px;top:669.38px;font-size:16px;line-height:19px;color:#1a1a1a;letter-spacing:0.000px;font-weight:400;">Free</span>
<span style="left:851.80px;top:695.28px;font-size:16px;line-height:19px;color:#1a1a1a;letter-spacing:0.000px;font-weight:400;">Linear</span>
<span style="left:851.80px;top:721.18px;font-size:16px;line-height:19px;color:#1a1a1a;letter-spacing:0.000px;font-weight:400;">Constant</span>
<span style="left:851.80px;top:747.18px;font-size:16px;line-height:19px;color:#1a1a1a;letter-spacing:0.442px;font-weight:400;">Weighted</span>
<svg style="left:820.5px;top:725.6px" width="12" height="10" viewBox="0 0 12 10"><path d="M0.7 5.2l3.3 3.3 7-7.5" stroke="#1a1a1a" stroke-width="1.1" fill="none"/></svg>
</body></html>
